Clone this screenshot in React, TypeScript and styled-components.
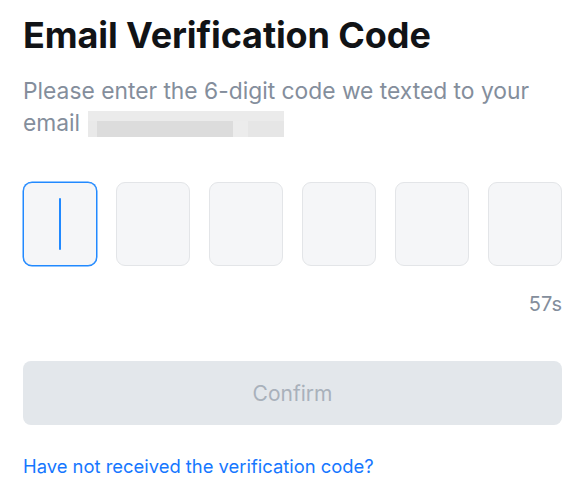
import React from "react";
import styled, { createGlobalStyle } from "styled-components";

const Global = createGlobalStyle`
  html, body { margin: 0; padding: 0; background: #ffffff; }
  body { font-family: Inter, "Noto Sans", "Liberation Sans", sans-serif; -webkit-font-smoothing: antialiased; }
  * { box-sizing: border-box; }
`;

const Page = styled.div`
  width: 578px;
  padding: 13px 16px 0 23px;
  display: flex;
  flex-direction: column;
`;

const Title = styled.h1`
  margin: 0;
  font-size: 36px;
  line-height: 44px;
  font-weight: 700;
  color: #111316;
  letter-spacing: -0.1px;
`;

const Subtitle = styled.p`
  margin: 18px 0 0;
  width: 539px;
  font-size: 22.8px;
  line-height: 32px;
  color: #848e9c;
  font-weight: 400;
`;

const Masked = styled.span`
  display: inline-block;
  vertical-align: -6px;
  width: 196px;
  height: 26px;
  margin-left: 8px;
  background:
    linear-gradient(90deg, transparent 0 9px, #dcdcdc 9px 145px, transparent 145px),
    linear-gradient(180deg, #ebebeb 0 10px, transparent 10px),
    linear-gradient(90deg, #e9e9e9 0 30px, #e4e4e4 30px 80px, #e8e8e8 80px 125px, #ececec 125px 160px, #e6e6e6 160px);
  background-size: 100% 100%, 100% 100%, 100% 100%;
  background-position: 0 10px, 0 0, 0 0;
  background-repeat: no-repeat;
`;

const Codes = styled.div`
  margin-top: 43px;
  display: grid;
  grid-template-columns: repeat(6, 74px);
  justify-content: space-between;
  width: 539px;
`;

const CodeBox = styled.div<{ $active?: boolean }>`
  height: 84px;
  border-radius: 9px;
  background: #f5f6f8;
  border: 1px solid ${(p) => (p.$active ? "#2189ff" : "#e3e5e8")};
  box-shadow: ${(p) => (p.$active ? "0 0 0 0.5px #2189ff" : "none")};
  display: flex;
  align-items: center;
  justify-content: center;
`;

const Caret = styled.div`
  width: 2px;
  height: 52px;
  background: #2189ff;
  border-radius: 1px;
`;

const Timer = styled.div`
  margin-top: 26px;
  width: 539px;
  text-align: right;
  font-size: 20px;
  line-height: 24px;
  color: #848e9c;
`;

const ConfirmButton = styled.button`
  margin-top: 45px;
  width: 539px;
  height: 64px;
  border: none;
  border-radius: 8px;
  background: #e3e7eb;
  color: #a9b1bb;
  font-family: inherit;
  font-size: 21px;
  font-weight: 400;
  cursor: not-allowed;
`;

const Link = styled.a`
  margin-top: 29px;
  font-size: 18.4px;
  line-height: 24px;
  color: #1677ff;
  text-decoration: none;
  cursor: pointer;
`;

export default function App() {
  return (
    <>
      <Global />
      <Page>
        <Title>Email Verification Code</Title>
        <Subtitle>
          Please enter the 6-digit code we texted to your email
          <Masked />
        </Subtitle>
        <Codes>
          {[0, 1, 2, 3, 4, 5].map((i) => (
            <CodeBox key={i} $active={i === 0}>
              {i === 0 && <Caret />}
            </CodeBox>
          ))}
        </Codes>
        <Timer>57s</Timer>
        <ConfirmButton disabled>Confirm</ConfirmButton>
        <Link>Have not received the verification code?</Link>
      </Page>
    </>
  );
}
